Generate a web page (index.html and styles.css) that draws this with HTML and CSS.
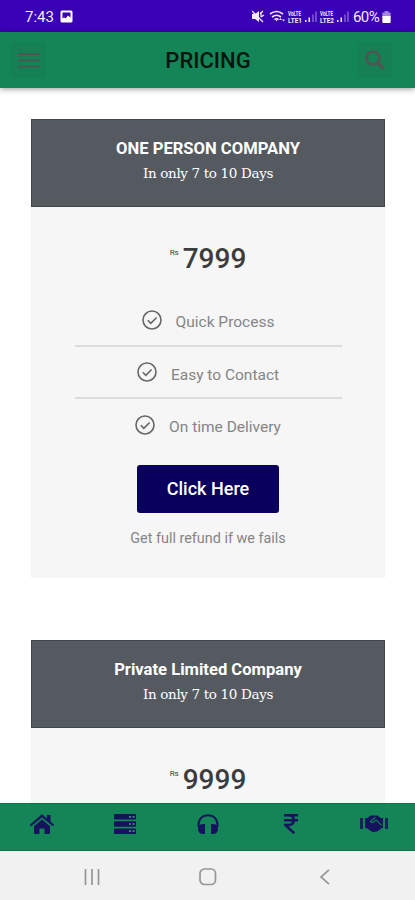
FILE: index.html
```html
<!DOCTYPE html>
<html lang="en">
<head>
  <meta charset="UTF-8">
  <meta name="viewport" content="width=device-width, initial-scale=1">
  <title>Pricing</title>
  <link rel="stylesheet" href="styles.css">
</head>
<body>

  <div class="status-bar">
    <span class="time">7:43</span>
    <svg class="picture" width="13" height="13" viewBox="0 0 13 13">
      <rect x="0.5" y="0.5" width="12" height="12" rx="1.5" fill="#fff"/>
      <path d="M2.5 2.5h8v5l-2.5-2-2.5 3-1.5-1.2-1.5 1.4z" fill="#3a00b5"/>
    </svg>
    <div class="status-icons">
      <svg width="132" height="16" viewBox="0 0 132 16" fill="#f1eaff">
        <path d="M0 5h3l4-3v11l-4-3H0z"/>
        <path d="M0 2l11 11M8 5l3-3M9 8l3-2M9 3v5" fill="none" stroke="#f1eaff" stroke-width="1.3"/>
        <path d="M18 5q6.500-5 13 0M20 8q4.500-3.500 9 0M22.500 10.500q2-1.500 4 0" fill="none" stroke="#f1eaff" stroke-width="1.6"/>
        <path d="M23.500 10.500h2l-1 2zM27 11l1.500-2 1.500 2zM30 10.500l1.500 2 1.500-2z"/>
        <text x="36" y="7" class="volte" textLength="13" lengthAdjust="spacingAndGlyphs">VoLTE</text>
        <text x="36" y="13.500" class="volte" textLength="14" lengthAdjust="spacingAndGlyphs">LTE1</text>
        <path d="M53 11h1.500v2H53zM56.500 8.500H58V13h-1.500z"/>
        <path d="M60 5.500h2V13h-2zM63 2.500h2V13h-2z" opacity=".3"/>
        <text x="68" y="7" class="volte" textLength="13" lengthAdjust="spacingAndGlyphs">VoLTE</text>
        <text x="68" y="13.500" class="volte" textLength="14" lengthAdjust="spacingAndGlyphs">LTE2</text>
        <path d="M85 11h1.500v2H85zM88.500 8.500H90V13h-1.500z"/>
        <path d="M92 5.500h2V13h-2zM95 2.500h2V13h-2z" opacity=".3"/>
      </svg>
      <span class="percent">60%</span>
      <svg class="battery" width="9" height="12" viewBox="0 0 9 13">
        <path d="M2.500 0h4v1.500H9V6H0V1.500h2.500z" fill="#a384e2"/>
        <path d="M0 5.500h9V12q0 1-1 1H1q-1 0-1-1z" fill="#fff"/>
      </svg>
    </div>
  </div>

  <header class="top-bar">
    <button class="icon-button" aria-label="Menu">
      <svg width="22" height="16" viewBox="0 0 22 16" stroke="#4e5654" stroke-width="1.800">
        <path d="M0 2h22M0 8.300h22M0 14.600h22"/>
      </svg>
    </button>
    <h1>PRICING</h1>
    <button class="icon-button" aria-label="Search">
      <svg width="20" height="20" viewBox="0 0 20 20" fill="none" stroke="#4e5654">
        <circle cx="8" cy="8" r="6.400" stroke-width="2.900"/>
        <path d="M12.500 12.500l6.300 6.300" stroke-width="3.600"/>
      </svg>
    </button>
  </header>

  <main class="plans">
    <section class="plan">
      <div class="plan-head">
        <h2>ONE PERSON COMPANY</h2>
        <p>In only 7 to 10 Days</p>
      </div>
      <div class="plan-body">
        <div class="price"><span class="currency">Rs</span>7999</div>
        <ul class="features">
          <li>
            <svg class="check" viewBox="0 0 20 20"><circle cx="10" cy="10" r="9"/><path d="M5.800 10.300l3 3 5.800-5.800"/></svg>
            <span>Quick Process</span>
          </li>
          <li>
            <svg class="check" viewBox="0 0 20 20"><circle cx="10" cy="10" r="9"/><path d="M5.800 10.300l3 3 5.800-5.800"/></svg>
            <span>Easy to Contact</span>
          </li>
          <li>
            <svg class="check" viewBox="0 0 20 20"><circle cx="10" cy="10" r="9"/><path d="M5.800 10.300l3 3 5.800-5.800"/></svg>
            <span>On time Delivery</span>
          </li>
        </ul>
        <a class="plan-button" href="#">Click Here</a>
        <p class="note">Get full refund if we fails</p>
      </div>
    </section>

    <section class="plan">
      <div class="plan-head">
        <h2>Private Limited Company</h2>
        <p>In only 7 to 10 Days</p>
      </div>
      <div class="plan-body">
        <div class="price"><span class="currency">Rs</span>9999</div>
      </div>
    </section>
  </main>

  <nav class="tab-bar">
    <a href="#" aria-label="Home">
      <svg width="26" height="20" viewBox="0 0 26 20">
        <path d="M1.500 11.500L13 1.800l11.500 9.700" fill="none" stroke="#14135c" stroke-width="2.200"/>
        <path d="M18 1h3.500v7L18 5zM13 5.500l8 6.700V19q0 1-1 1h-4.500v-5.500h-5V20H6q-1 0-1-1v-6.800z"/>
      </svg>
    </a>
    <a href="#" aria-label="Services">
      <svg width="22" height="20" viewBox="0 0 22 20">
        <rect width="22" height="5.600" rx="1"/>
        <rect y="7.200" width="22" height="5.600" rx="1"/>
        <rect y="14.400" width="22" height="5.600" rx="1"/>
        <path d="M15 2.800h2m1.500 0h2M15 10h2m1.500 0h2M15 17.200h2m1.500 0h2" stroke="#4f8d80" stroke-width="1.700"/>
      </svg>
    </a>
    <a href="#" aria-label="Support">
      <svg width="22" height="20" viewBox="0 0 22 20">
        <path d="M1.500 13v-2C1.500 5 5.500 1.200 11 1.200S20.500 5 20.500 11v2" fill="none" stroke="#14135c" stroke-width="2"/>
        <path d="M8 10v10H6.500Q1 20 1 15t5.500-5zM14 10v10h1.500Q21 20 21 15t-5.500-5z"/>
      </svg>
    </a>
    <a href="#" aria-label="Pricing">
      <svg width="14" height="20" viewBox="0 0 14 20" fill="none" stroke="#14135c" stroke-width="2.500">
        <path d="M0 1.300h14M0 6.300h14M0 1.300h4.500q5.200 0 5.200 4.700T4.500 11H1.200l9 8.200"/>
      </svg>
    </a>
    <a href="#" aria-label="Partners">
      <svg width="28" height="18" viewBox="0 0 28 18">
        <path d="M0 3h3v11H0zM25 3h3v11h-3z" opacity=".85"/>
        <path d="M5 3h2.500l3-2.500h7L20.500 3H23v10h-1.500q-1 2-2.500 2-1.500 2-3.500 1.500-2.500 1.500-4.500-.5L6.500 13H5z"/>
        <path d="M15.500 2.200l-5 4.300q1 2 3.500.3l2.200-1.700 5.500 5.200" fill="none" stroke="#138556" stroke-width="1.100"/>
      </svg>
    </a>
  </nav>

  <div class="system-bar">
    <svg width="16" height="16" viewBox="0 0 16 16"><path d="M1.500 0v16M8 0v16M14.500 0v16"/></svg>
    <svg width="18" height="18" viewBox="0 0 18 18"><rect x="1" y="1" width="15.500" height="15.500" rx="4.500"/></svg>
    <svg width="18" height="16" viewBox="0 0 18 16"><path d="M13 .8L5 8l8 7.200"/></svg>
  </div>

</body>
</html>
```

FILE: styles.css
```css
* {
  box-sizing: border-box;
}
body {
  margin: 0;
  height: 900px;
  display: flex;
  flex-direction: column;
  overflow: hidden;
  background: #fff;
  font-family: Roboto, sans-serif;
}
h1, h2, p, ul {
  margin: 0;
  padding: 0;
}

.status-bar {
  flex: none;
  height: 32px;
  display: flex;
  align-items: center;
  padding: 2px 24px 0 25px;
  background: #3a00b5;
  color: #f3edff;
  font-size: 15px;
}
.time {
  width: 35px;
}
.picture {
  margin-bottom: 2px;
}
.status-icons {
  display: flex;
  align-items: center;
  margin-left: auto;
}
.volte {
  font-size: 7px;
  font-weight: bold;
}
.percent {
  width: 28px;
  margin-left: -31px;
  letter-spacing: -0.6px;
}
.battery {
  margin-left: 1px;
}

.top-bar {
  flex: none;
  height: 56px;
  display: grid;
  grid-template-columns: 35px 1fr 35px;
  align-items: center;
  padding: 0 23px 0 11px;
  background: #138556;
  box-shadow: 0 1px 6px rgba(0, 0, 0, 0.4);
  z-index: 1;
}
.top-bar h1 {
  padding-left: 13px;
  color: #03150f;
  font-size: 22px;
  font-weight: 500;
  text-align: center;
}
.icon-button {
  width: 35px;
  height: 36px;
  display: flex;
  align-items: center;
  justify-content: center;
  padding: 0;
  border: none;
  background: #148054;
}

.plans {
  flex: 1;
  min-height: 0;
  overflow: hidden;
  padding: 31px 30px 0 31px;
}
.plan {
  height: 459px;
  margin-bottom: 62px;
  background: #f6f6f6;
  text-align: center;
}
.plan-head {
  height: 88px;
  padding-top: 18px;
  background: #555a60;
  border: 1px solid #41464c;
  color: #fff;
}
.plan-head h2 {
  font-size: 16.6px;
  line-height: 22px;
  font-weight: bold;
}
.plan-head p {
  margin-top: 3px;
  font-family: "Roboto Slab", "DejaVu Serif", serif;
  font-size: 13.5px;
  line-height: 20px;
  letter-spacing: -0.35px;
}
.plan-body {
  display: flex;
  flex-direction: column;
  align-items: center;
}
.price {
  display: flex;
  margin-top: 34px;
  color: #3c3c3c;
  font-size: 28px;
  line-height: 36px;
  font-weight: 500;
}
.currency {
  width: 13px;
  font-size: 8px;
  line-height: 24px;
  font-weight: normal;
  text-align: left;
}
.features {
  width: 267px;
  margin-top: 17px;
  list-style: none;
}
.features li {
  height: 52.5px;
  display: flex;
  align-items: center;
  justify-content: center;
  gap: 14px;
  padding-top: 1px;
  border-bottom: 2px solid #dcdcdc;
  color: #858585;
  font-size: 15.5px;
}
.features li:last-child {
  border-color: transparent;
}
.features span {
  padding-top: 5px;
}
.check {
  width: 20px;
  height: 20px;
  fill: none;
  stroke: #666;
  stroke-width: 1.6;
}
.plan-button {
  width: 142px;
  height: 48px;
  margin-top: 13px;
  border-radius: 3px;
  background: #08005c;
  color: #fff;
  font-size: 18px;
  line-height: 48px;
  font-weight: 500;
  text-decoration: none;
}
.note {
  margin-top: 16px;
  color: #858585;
  font-size: 14.4px;
  line-height: 20px;
}

.tab-bar {
  flex: none;
  height: 48px;
  display: grid;
  grid-template-columns: repeat(5, 1fr);
  justify-items: center;
  background: #138556;
  border-top: 1px solid #0b7549;
  border-bottom: 1px solid #0b7549;
}
.tab-bar a {
  height: 40px;
  display: flex;
  align-items: center;
  fill: #14135c;
}

.system-bar {
  flex: none;
  height: 49px;
  display: flex;
  align-items: center;
  justify-content: space-between;
  padding: 3px 81px 0 84px;
  background: #f1f1f1;
  fill: none;
  stroke: #969696;
  stroke-width: 1.7;
}
```
